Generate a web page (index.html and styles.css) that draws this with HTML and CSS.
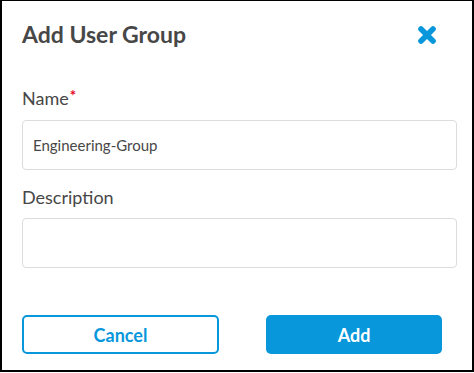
FILE: index.html
```html
<!doctype html>
<html lang="en">
<head>
<meta charset="utf-8">
<meta name="viewport" content="width=device-width, initial-scale=1">
<title>Add User Group</title>
<link rel="stylesheet" href="styles.css">
</head>
<body>

<div class="dialog">
	<div class="dialog-head">
		<h1>Add User Group</h1>
		<button type="button" class="close" aria-label="Close">
			<svg width="20" height="18" viewBox="0 0 20 18"><path d="M4 3 L16 15 M16 3 L4 15" stroke="#0897db" stroke-width="5.6" stroke-linecap="round"/></svg>
		</button>
	</div>

	<div class="field field--first">
		<label for="group-name">Name<span class="req">*</span></label>
		<input type="text" id="group-name" value="Engineering-Group">
	</div>

	<div class="field">
		<label for="group-desc">Description</label>
		<input type="text" id="group-desc">
	</div>

	<div class="actions">
		<button type="button" class="btn btn--cancel">Cancel</button>
		<button type="button" class="btn btn--add">Add</button>
	</div>
</div>

</body>
</html>
```

FILE: styles.css
```css
body {
	margin: 0;
	padding: 0;
	font-family: 'Lato', sans-serif;
	color: #474747;
}

.dialog {
	box-sizing: border-box;
	width: 474px;
	height: 372px;
	padding: 20px 15px 0 20px;
	border: 2px solid #000;
	border-top-width: 1px;
	background: #fff;
}

.dialog-head {
	display: flex;
	justify-content: space-between;
	align-items: center;
	height: 27px;
}

h1 {
	margin: 0;
	font-size: 23px;
	font-weight: 700;
	line-height: 27px;
}

.close {
	display: flex;
	margin: 0 20px 0 0;
	padding: 0;
	border: 0;
	background: none;
}

.field {
	margin-top: 17px;
}
.field--first {
	margin-top: 40px;
}

label {
	display: block;
	margin-bottom: 10px;
	font-size: 18px;
	line-height: 1.2;
}

.req {
	position: relative;
	top: -4px;
	margin-left: 1px;
	font-size: 15px;
	font-weight: 700;
	line-height: 0;
	color: #e3001b;
}

input[type="text"] {
	box-sizing: border-box;
	display: block;
	width: 100%;
	height: 50px;
	padding: 0 10px;
	border: 1px solid #dcdcdc;
	border-radius: 4px;
	font-family: 'Lato', sans-serif;
	font-size: 15px;
	color: #474747;
}

.actions {
	display: flex;
	gap: 47px;
	margin-top: 47px;
}

.btn {
	box-sizing: border-box;
	height: 39px;
	border-radius: 5px;
	font-family: 'Lato', sans-serif;
	font-size: 18px;
	font-weight: 700;
}
.btn--cancel {
	width: 197px;
	border: 2px solid #0897db;
	background: #fff;
	color: #0897db;
}
.btn--add {
	width: 176px;
	border: 0;
	background: #0897db;
	color: #fff;
}
```
